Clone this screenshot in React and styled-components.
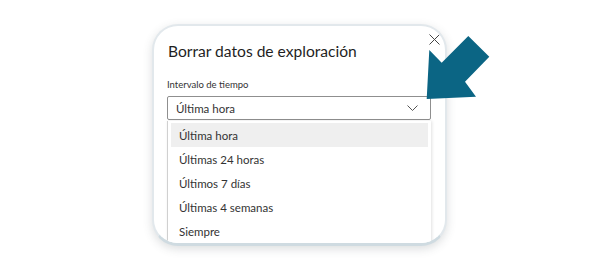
import styled, { createGlobalStyle } from 'styled-components';

const GlobalStyle = createGlobalStyle`
	html, body {
		margin: 0;
		padding: 0;
		background: #ffffff;
	}
	body {
		font-family: Lato, 'Noto Sans', sans-serif;
		color: #242424;
	}
`;

const options = [
	'Última hora',
	'Últimas 24 horas',
	'Últimos 7 días',
	'Últimas 4 semanas',
	'Siempre',
];

const App = () => {
	return (
		<>
			<GlobalStyle />
			<Stage>
				<Card>
					<Header>
						<Title>Borrar datos de exploración</Title>
						<CloseButton aria-label='Cerrar'>
							<svg width='11' height='11' viewBox='0 0 11 11'>
								<path d='M0.5 0.5 L10.5 10.5 M10.5 0.5 L0.5 10.5' stroke='#444' strokeWidth='1' fill='none' />
							</svg>
						</CloseButton>
					</Header>
					<Label>Intervalo de tiempo</Label>
					<Select>
						<span>Última hora</span>
						<svg width='11' height='6' viewBox='0 0 11 6'>
							<path d='M0.5 0.5 L5.5 5.5 L10.5 0.5' stroke='#555' strokeWidth='1' fill='none' />
						</svg>
					</Select>
					<List>
						{options.map((o, i) => (
							<Option key={o} $active={i === 0}>
								{o}
							</Option>
						))}
					</List>
				</Card>
				<Pointer width='80' height='80' viewBox='0 0 80 80'>
					<polygon
						points='1.7,79 4.3,30 16.7,42.7 43.3,16 64.3,36.7 40,61.7 51,76.7'
						fill='#0b6584'
					/>
				</Pointer>
			</Stage>
		</>
	);
};

export default App;

const Stage = styled.div`
	position: relative;
	width: 600px;
	height: 280px;
	padding: 24px 0 0 152px;
	box-sizing: border-box;
`;

const Card = styled.div`
	width: 295px;
	height: 222px;
	box-sizing: border-box;
	border: 2px solid #e2e8ec;
	border-bottom-width: 3px;
	border-bottom-color: #cfdbe1;
	border-radius: 26px;
	background: #ffffff;
	box-shadow: 0 3px 10px rgba(60, 70, 80, 0.18);
	padding: 14px 14px 0 13px;
	overflow: hidden;
`;

const Header = styled.div`
	display: flex;
	justify-content: space-between;
	align-items: flex-start;
`;

const Title = styled.h2`
	margin: 0 0 0 1px;
	font-size: 15.6px;
	font-weight: 400;
	line-height: 22px;
	color: #1f1f1f;
`;

const CloseButton = styled.button`
	border: none;
	background: none;
	padding: 0;
	margin: -6px -9px 0 0;
	width: 11px;
	height: 11px;
	display: flex;
`;

const Label = styled.div`
	margin-top: 16px;
	font-size: 9.5px;
	line-height: 13px;
	color: #333;
`;

const Select = styled.div`
	margin-top: 5px;
	height: 24px;
	box-sizing: border-box;
	border: 1px solid #8f8f8f;
	border-radius: 2px;
	display: flex;
	align-items: center;
	justify-content: space-between;
	padding: 0 12px 0 8px;
	font-size: 11.5px;
	color: #333;
`;

const List = styled.div`
	margin-top: 1px;
	padding: 2px 3px;
	background: #ffffff;
	border-left: 1px solid #d0d0d0;
	box-shadow: 1px 0 3px rgba(0, 0, 0, 0.12);
	display: flex;
	flex-direction: column;
`;

const Option = styled.div`
	height: 24px;
	flex-shrink: 0;
	display: flex;
	align-items: center;
	padding-left: 8px;
	font-size: 11.5px;
	color: #333;
	background: ${(p) => (p.$active ? '#efefef' : 'transparent')};
`;

const Pointer = styled.svg`
	position: absolute;
	left: 425px;
	top: 20px;
`;
